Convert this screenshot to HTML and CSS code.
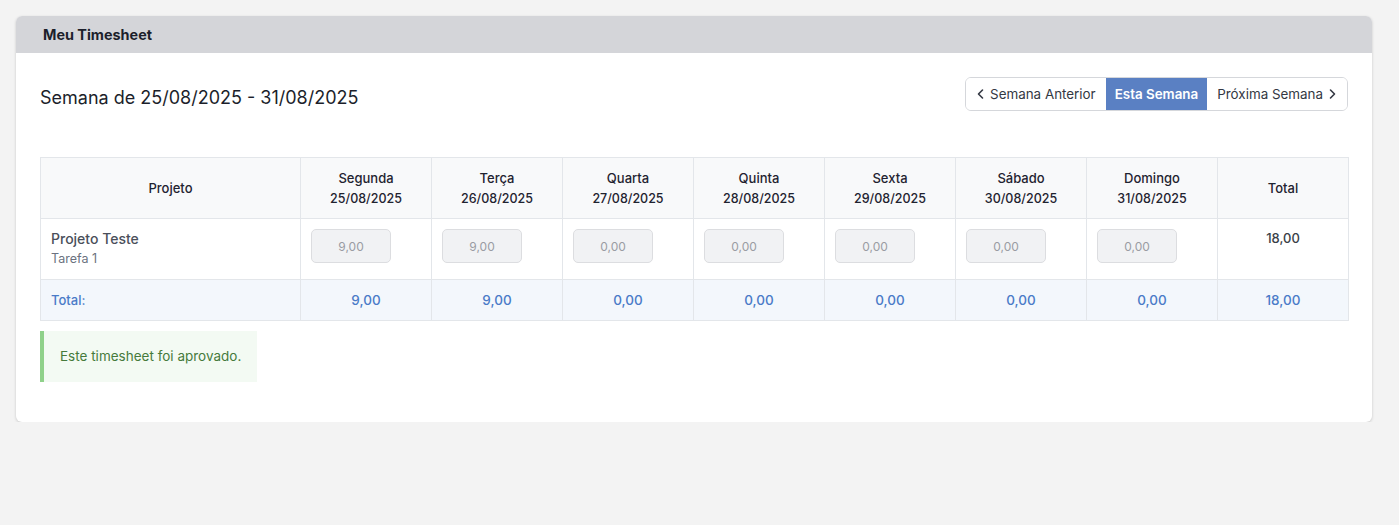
FILE: index.html
```html
<!DOCTYPE html>
<html lang="pt-BR">
<head>
<meta charset="utf-8">
<title>Meu Timesheet</title>
<link rel="stylesheet" href="styles.css">
</head>
<body>
<div class="card">
  <div class="card-header">Meu Timesheet</div>
  <div class="card-body">
    <div class="week-bar">
      <h2 class="week-title">Semana de 25/08/2025 - 31/08/2025</h2>
      <div class="btn-group">
        <button class="btn"><svg class="chev" viewBox="0 0 10 12" width="10" height="12"><path d="M6.5 2 2.5 6l4 4" fill="none" stroke="currentColor" stroke-width="1.6" stroke-linecap="round" stroke-linejoin="round"/></svg>Semana Anterior</button>
        <button class="btn active">Esta Semana</button>
        <button class="btn">Próxima Semana<svg class="chev" viewBox="0 0 10 12" width="10" height="12"><path d="M3.5 2l4 4-4 4" fill="none" stroke="currentColor" stroke-width="1.6" stroke-linecap="round" stroke-linejoin="round"/></svg></button>
      </div>
    </div>
    <table class="ts">
      <thead>
        <tr>
          <th class="col-proj">Projeto</th>
          <th>Segunda<br><span>25/08/2025</span></th>
          <th>Terça<br><span>26/08/2025</span></th>
          <th>Quarta<br><span>27/08/2025</span></th>
          <th>Quinta<br><span>28/08/2025</span></th>
          <th>Sexta<br><span>29/08/2025</span></th>
          <th>Sábado<br><span>30/08/2025</span></th>
          <th>Domingo<br><span>31/08/2025</span></th>
          <th>Total</th>
        </tr>
      </thead>
      <tbody>
        <tr class="row">
          <td class="proj"><div class="proj-name">Projeto Teste</div><div class="task">Tarefa 1</div></td>
          <td class="cell"><input class="hours" value="9,00" disabled></td>
          <td class="cell"><input class="hours" value="9,00" disabled></td>
          <td class="cell"><input class="hours" value="0,00" disabled></td>
          <td class="cell"><input class="hours" value="0,00" disabled></td>
          <td class="cell"><input class="hours" value="0,00" disabled></td>
          <td class="cell"><input class="hours" value="0,00" disabled></td>
          <td class="cell"><input class="hours" value="0,00" disabled></td>
          <td class="row-total">18,00</td>
        </tr>
        <tr class="totals">
          <td class="tot-label">Total:</td>
          <td>9,00</td>
          <td>9,00</td>
          <td>0,00</td>
          <td>0,00</td>
          <td>0,00</td>
          <td>0,00</td>
          <td>0,00</td>
          <td>18,00</td>
        </tr>
      </tbody>
    </table>
    <div class="alert">Este timesheet foi aprovado.</div>
  </div>
</div>
</body>
</html>
```
FILE: styles.css
```css
* { box-sizing: border-box; }
html, body { margin: 0; }
body {
  background: #f3f3f3;
  font-family: Inter, "Noto Sans", sans-serif;
  color: #1f2330;
  padding: 16px 27px 0 16px;
}
.card {
  background: #fff;
  border-radius: 6px;
  box-shadow: 0 1px 3px rgba(0,0,0,0.18);
  overflow: hidden;
}
.card-header {
  background: #d4d5d9;
  height: 37px;
  line-height: 37px;
  padding: 0 27px;
  font-size: 14.4px;
  font-weight: 700;
  color: #1c1f2b;
}
.card-body {
  padding: 24px 24px 40px;
}
.week-bar {
  display: flex;
  align-items: center;
  justify-content: space-between;
  height: 34px;
  margin-bottom: 46px;
}
.week-title {
  margin: 6px 0 0;
  font-size: 18px;
  font-weight: 400;
  color: #1c1f2b;
}
.btn-group {
  display: flex;
  border: 1px solid #d5d7db;
  border-radius: 6px;
  overflow: hidden;
  height: 34px;
}
.btn {
  font-family: inherit;
  font-size: 13.4px;
  color: #333843;
  background: #fff;
  border: 0;
  padding: 0 10px;
  display: flex;
  align-items: center;
  gap: 4px;
  height: 32px;
}
.btn.active {
  background: #5a80c3;
  color: #fff;
  font-weight: 600;
  padding: 0 9px;
}
.chev { display: block; }
.ts {
  width: 100%;
  border-collapse: collapse;
  table-layout: fixed;
  font-size: 13px;
}
.ts th, .ts td {
  border: 1px solid #e3e6ea;
}
.ts th {
  background: #f8f9fa;
  height: 61px;
  font-weight: 500;
  line-height: 20px;
  color: #1f2330;
  width: 131px;
}
.ts th span { font-size: 12.5px; }
.ts th.col-proj { width: 260px; }
.row td {
  height: 61px;
  padding: 0 10px;
  vertical-align: middle;
}
.row td.cell {
  vertical-align: top;
  padding-top: 10px;
}
.proj-name {
  font-size: 14px;
  font-weight: 500;
  color: #4a4f5a;
  line-height: 20px;
}
.task {
  font-size: 12.5px;
  color: #6b7280;
  line-height: 20px;
}
.hours {
  display: block;
  width: 80px;
  height: 34px;
  background: #f1f2f4;
  border: 1px solid #dcdde0;
  border-radius: 5px;
  text-align: center;
  font-family: inherit;
  font-size: 12px;
  color: #9a9ca3;
  padding: 0;
}
.row td.row-total {
  vertical-align: top;
  text-align: center;
  padding-top: 11px;
  font-weight: 500;
  color: #3a3f48;
}
.totals td {
  background: #f3f7fc;
  height: 41px;
  text-align: center;
  color: #4a7bc8;
  font-weight: 500;
  font-size: 13.5px;
}
.totals td.tot-label {
  text-align: left;
  padding-left: 10px;
  font-size: 13px;
}
.alert {
  margin-top: 10px;
  display: inline-block;
  background: #f3faf3;
  border-left: 4px solid #8fd18a;
  padding: 0 16px;
  height: 51px;
  line-height: 51px;
  font-size: 13.5px;
  color: #467a3c;
}
```
